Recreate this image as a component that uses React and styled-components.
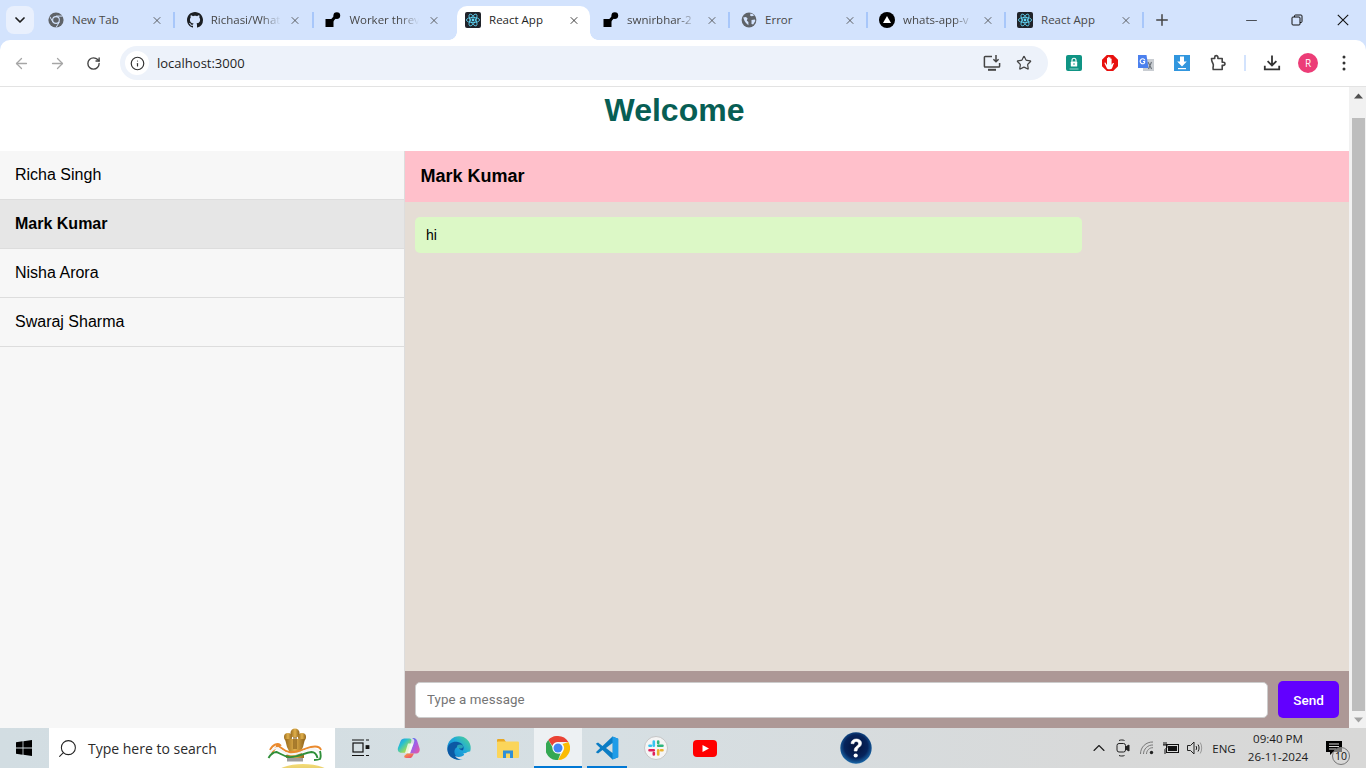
import React from 'react';
import styled, { createGlobalStyle } from 'styled-components';
import { ArrowLeft, ArrowRight, RotateCw, Info, Star, X, Plus, ChevronDown, Minus, ChevronUp, Search } from 'lucide-react';

const Global = createGlobalStyle`
  html, body { margin: 0; padding: 0; height: 100%; overflow: hidden; background: #fff; }
  * { box-sizing: border-box; }
  #root { height: 768px; }
`;

const Screen = styled.div`
  width: 1366px; height: 768px; display: flex; flex-direction: column; overflow: hidden;
  font-family: "Liberation Sans", Arial, sans-serif; background: #d3e3fd;
`;

/* ---------- browser tab strip ---------- */
const TabStrip = styled.div`
  height: 40px; background: #d3e3fd; display: flex; align-items: stretch; flex: none;
  padding-left: 6px;
`;
const TabSearch = styled.div`
  width: 28px; height: 28px; margin: 6px 4px 0 0; border-radius: 8px; background: #e9f0fd;
  display: flex; align-items: center; justify-content: center; color: #1f1f1f; flex: none;
`;
const Tab = styled.div`
  position: relative; width: ${p => p.$w}px; flex: none; display: flex; align-items: center;
  padding-left: 10px; height: 40px;
  font-family: "Open Sans", "Noto Sans", sans-serif; font-size: 11.5px; color: #474747;
  &::after {
    content: ''; position: absolute; right: 1.5px; top: 12px; height: 16px; width: 2px;
    background: ${p => p.$sep ? '#a8c7fa' : 'transparent'};
  }
`;
const ActiveTab = styled.div`
  flex: none; margin: 6px 3px 0 3px; height: 34px; width: 133px; background: #fff; border-radius: 10px 10px 0 0;
  display: flex; align-items: center; padding: 0 0 6px 8px; position: relative;
  font-family: "Open Sans", "Noto Sans", sans-serif; font-size: 11.5px; color: #1f1f1f;
  &::before, &::after { content: ''; position: absolute; bottom: 0; width: 8px; height: 8px; }
  &::before { left: -8px; background: radial-gradient(circle at 0 0, #d3e3fd 7.5px, #fff 8px); }
  &::after { right: -8px; background: radial-gradient(circle at 100% 0, #d3e3fd 7.5px, #fff 8px); }
`;
const FavSlot = styled.span`
  width: 16px; height: 16px; flex: none; display: block;
  svg { display: block; }
`;
const TabTitle = styled.span`
  margin-left: 8px; width: 70px; flex: none; white-space: nowrap; padding-bottom: 1px;
  ${p => p.$fade && `-webkit-mask-image: linear-gradient(90deg, #000 72%, transparent 100%); mask-image: linear-gradient(90deg, #000 72%, transparent 100%);`}
`;
const TabClose = styled.span`
  margin-left: 8.5px; width: 12px; height: 12px; display: flex; align-items: center; justify-content: center;
  color: ${p => p.$active ? '#1f1f1f' : '#474747'}; flex: none;
`;
const NewTab = styled.div`
  width: 33px; display: flex; align-items: center; justify-content: center; color: #444; flex: none;
`;
const WindowControls = styled.div`
  margin-left: auto; display: flex; height: 40px; color: #111;
`;
const WinBtn = styled.div`
  width: 46px; display: flex; align-items: center; justify-content: center;
`;

/* ---------- toolbar ---------- */
const Toolbar = styled.div`
  height: 47px; flex: none; background: #fff; border-bottom: 1px solid #e3e3e3;
  display: flex; align-items: center; padding: 0 0 0 3px; border-radius: 10px 10px 0 0;
`;
const NavBtn = styled.div`
  width: 36px; height: 36px; display: flex; align-items: center; justify-content: center;
  color: ${p => p.$off ? '#a6a6a6' : '#444'}; flex: none;
`;
const Omnibox = styled.div`
  margin-left: 9px; width: 928px; height: 34px; border-radius: 17px; background: #edf2fa;
  display: flex; align-items: center; padding-left: 5px; flex: none;
`;
const SiteInfo = styled.div`
  width: 24px; height: 24px; border-radius: 50%; background: #fff; display: flex; align-items: center; justify-content: center; color: #333;
`;
const Url = styled.span`
  margin-left: 8px; font-family: "Open Sans", "Noto Sans", sans-serif; font-size: 13px; color: #1f1f1f; flex: 1;
`;
const OmniIcon = styled.div`
  width: 32px; display: flex; align-items: center; justify-content: center; color: #444; margin-right: ${p => p.$mr || 0}px;
`;
const ExtBar = styled.div`
  display: flex; align-items: center; margin-left: 8px;
`;
const ExtBtn = styled.div`
  width: 36px; height: 36px; display: flex; align-items: center; justify-content: center; flex: none; color: #444;
`;
const ExtSep = styled.div`
  width: 2px; height: 16px; background: #d3e3fd; margin: 0 8px;
`;
const Avatar = styled.div`
  width: 20px; height: 20px; border-radius: 50%; background: #ec3d77; color: #fff; font-size: 10px;
  font-family: "Open Sans", sans-serif; display: flex; align-items: center; justify-content: center;
`;

/* ---------- page ---------- */
const Viewport = styled.div`
  height: 641px; flex: none; display: flex; background: #fff;
`;
const Page = styled.div`
  width: 1349px; display: flex; flex-direction: column; flex: none;
`;
const Title = styled.h1`
  margin: 0; height: 64px; flex: none; text-align: center; color: #075e54; font-size: 32px; font-weight: 700;
  line-height: 46px;
`;
const ChatLayout = styled.div`
  flex: 1; display: flex; min-height: 0;
`;
const Sidebar = styled.div`
  width: 405px; flex: none; background: #f7f7f7; border-right: 1px solid #ddd;
`;
const Contact = styled.div`
  height: 49px; padding: 0 15px; display: flex; align-items: center; font-size: 16px; color: #000;
  border-bottom: 1px solid #ddd;
  background: ${p => p.$active ? '#e6e6e6' : 'transparent'};
  font-weight: ${p => p.$active ? 700 : 400};
`;
const Chat = styled.div`
  flex: 1; display: flex; flex-direction: column; min-width: 0;
`;
const ChatHeader = styled.div`
  height: 51px; flex: none; background: #ffc0cb; padding: 0 15.5px; display: flex; align-items: center;
  font-size: 18px; font-weight: 700; color: #000;
`;
const Messages = styled.div`
  flex: 1; background: #e5ddd5; padding: 15px 10px;
`;
const Bubble = styled.div`
  width: 667px; height: 36px; background: #dcf8c6; border-radius: 5px; padding: 0 11px; display: flex; align-items: center;
  font-size: 14px; color: #000;
`;
const Composer = styled.div`
  height: 57px; flex: none; background: #ad9896; display: flex; align-items: center; padding: 0 10px;
`;
const MessageInput = styled.input`
  flex: 1; height: 36px; border: 1px solid #ccc; border-radius: 5px; background: #fff; padding: 0 11px; outline: none;
  font-family: Roboto, sans-serif; font-size: 13.3px; letter-spacing: 0.1px;
  &::placeholder { color: #757575; opacity: 1; }
`;
const SendButton = styled.button`
  margin-left: 10px; width: 61px; height: 37px; border: 0; border-radius: 5px; background: #6200ff; color: #fff;
  font-family: Roboto, sans-serif; font-weight: 500; font-size: 13.5px; padding: 0;
`;
const Scrollbar = styled.div`
  width: 17px; flex: none; background: #f1f1f1; display: flex; flex-direction: column; align-items: center; padding-left: 1px;
`;
const ScrollArrow = styled.div`
  height: 17px; flex: none; display: flex; align-items: center; justify-content: center; width: 100%;
`;
const ScrollGap = styled.div`
  height: 14px; flex: none;
`;
const Thumb = styled.div`
  width: 13px; flex: 1; background: #bdbdbd;
`;

/* ---------- windows taskbar ---------- */
const Taskbar = styled.div`
  height: 40px; flex: none; display: flex; align-items: stretch;
  background: linear-gradient(90deg, #d2dde2 0%, #d6dfe3 45%, #d8d9d9 80%, #d8d8d7 100%);
`;
const StartBtn = styled.div`
  width: 49px; flex: none; display: flex; align-items: center; justify-content: center; padding: 0 2px 1px 0;
`;
const SearchBox = styled.div`
  width: 287px; flex: none; background: #fff; display: flex; align-items: center; padding-left: 8px; position: relative;
  font-family: "Open Sans", "Noto Sans", sans-serif; font-size: 14px; color: #2b2b2b; overflow: hidden;
  border-right: 1px solid #d6dfe3;
`;
const SearchGlyph = styled(Search)`
  transform: scaleX(-1); color: #222; flex: none;
`;
const SearchText = styled.span`
  margin-left: 10px;
`;
const Emblem = styled.svg`
  position: absolute; left: 218px; top: 0;
`;
const TaskBtn = styled.div`
  width: 49.2px; flex: none; display: flex; align-items: center; justify-content: center; position: relative;
  ${p => p.$focused && `background: #edf1f3; border-left: 1px solid #d6dfe3;`}
  ${p => p.$line && `&::after { content:''; position:absolute; bottom:0; left:${p.$focused ? 0 : 5}px; right:${p.$focused ? 0 : 4}px; height:2px; background:#0078d4; }`}
`;
const HelpSlot = styled.div`
  margin-left: 102px; width: 49px; display: flex; align-items: center; justify-content: center; flex: none;
`;
const Tray = styled.div`
  margin-left: auto; display: flex; align-items: center; height: 100%; color: #1c1c1c;
  font-family: "Open Sans", "Noto Sans", sans-serif; padding-right: 12px;
`;
const TrayIcon = styled.div`
  width: 24px; display: flex; align-items: center; justify-content: center; flex: none;
`;
const Lang = styled.div`
  font-size: 11.5px; width: 34px; text-align: center;
`;
const Clock = styled.div`
  width: 74px; text-align: center; font-size: 11.6px; line-height: 18px;
`;
const Notif = styled.div`
  position: relative; width: 39px; height: 100%; display: flex; align-items: center; justify-content: center; flex: none; padding-right: 2px;
`;
const NotifBadge = styled.span`
  position: absolute; left: 17px; top: 19px; width: 18px; height: 18px; border-radius: 50%; border: 1px solid #777;
  font-size: 10.5px; color: #111; display: flex; align-items: center; justify-content: center;
  background: rgba(216,216,215,.55);
`;

/* ---------- drawn icons ---------- */
const ChromeGrey = () => (
  <svg width="16" height="16" viewBox="0 0 16 16">
    <circle cx="8" cy="8" r="7.6" fill="#5f6368" />
    <circle cx="8" cy="8" r="3.9" fill="#d3e3fd" />
    <circle cx="8" cy="8" r="2.8" fill="#5f6368" />
    <path d="M8 4.1h6.6M5 10.4L1.8 4.6M11.3 10L8 15.6" stroke="#d3e3fd" strokeWidth="1" />
  </svg>
);
const GithubMark = () => (
  <svg width="16" height="16" viewBox="0 0 16 16" fill="#1b1f23">
    <path d="M8 0C3.58 0 0 3.58 0 8c0 3.54 2.29 6.53 5.47 7.59.4.07.55-.17.55-.38 0-.19-.01-.82-.01-1.49-2.01.37-2.53-.49-2.69-.94-.09-.23-.48-.94-.82-1.13-.28-.15-.68-.52-.01-.53.63-.01 1.08.58 1.23.82.72 1.21 1.87.87 2.33.66.07-.52.28-.87.51-1.07-1.78-.2-3.64-.89-3.64-3.95 0-.87.31-1.59.82-2.15-.08-.2-.36-1.02.08-2.12 0 0 .67-.21 2.2.82.64-.18 1.32-.27 2-.27s1.36.09 2 .27c1.53-1.04 2.2-.82 2.2-.82.44 1.1.16 1.92.08 2.12.51.56.82 1.27.82 2.15 0 3.07-1.87 3.75-3.65 3.95.29.25.54.73.54 1.48 0 1.07-.01 1.93-.01 2.2 0 .21.15.46.55.38A8.01 8.01 0 0016 8c0-4.42-3.58-8-8-8z" />
  </svg>
);
const WorkerMark = () => (
  <svg width="16" height="16" viewBox="0 0 16 16" fill="#000">
    <rect x="0.5" y="7" width="8" height="8" />
    <path d="M7 8.5L11 4" stroke="#000" strokeWidth="3" />
    <circle cx="11.8" cy="3.6" r="3.4" />
  </svg>
);
const ReactMark = () => (
  <svg width="16" height="16" viewBox="0 0 16 16">
    <rect width="16" height="16" rx="2" fill="#20232a" />
    <g fill="none" stroke="#61dafb" strokeWidth="0.8">
      <ellipse cx="8" cy="8" rx="6.6" ry="2.6" />
      <ellipse cx="8" cy="8" rx="6.6" ry="2.6" transform="rotate(60 8 8)" />
      <ellipse cx="8" cy="8" rx="6.6" ry="2.6" transform="rotate(120 8 8)" />
    </g>
    <circle cx="8" cy="8" r="1.4" fill="#61dafb" />
  </svg>
);
const GlobeGrey = () => (
  <svg width="16" height="16" viewBox="0 0 16 16">
    <circle cx="8" cy="8" r="7.4" fill="#5f6368" />
    <path d="M2.2 5.5L5 5l1.6 1.6-.8 2 1.6 1.5v3.2L5 11 3.6 9zM9.5 1.4l-.5 2 1.6.9 2.4-.5-1-1.5zM10.5 8l3.4-.6.4 1.6-2.2 3.4-1.6-.4z" fill="#d3e3fd" />
  </svg>
);
const VercelMark = () => (
  <svg width="16" height="16" viewBox="0 0 16 16">
    <circle cx="8" cy="8" r="8" fill="#000" />
    <path d="M8 4l4 7H4z" fill="#fff" />
  </svg>
);
const InstallIcon = () => (
  <svg width="18" height="18" viewBox="0 0 18 18" fill="none" stroke="#444" strokeWidth="1.5">
    <path d="M9 2.5H2.2a.8.8 0 00-.8.8v9a.8.8 0 00.8.8h13.6a.8.8 0 00.8-.8V9" />
    <path d="M5 15.8h8" strokeWidth="2" />
    <path d="M13 1v6.5M10.4 5.2L13 7.8l2.6-2.6" />
  </svg>
);
const ExtLock = () => (
  <svg width="16" height="16" viewBox="0 0 16 16">
    <rect width="16" height="16" rx="2" fill="#0f9484" />
    <rect x="4.8" y="6.6" width="6.4" height="5" rx=".6" fill="#fff" />
    <path d="M6 6.8V5.2a2 2 0 014 0v1.6" fill="none" stroke="#fff" strokeWidth="1.1" />
    <circle cx="8" cy="9" r=".8" fill="#0f9484" />
    <path d="M3.5 14h9" stroke="#cfeee9" strokeWidth=".7" />
  </svg>
);
const ExtStop = () => (
  <svg width="16" height="16" viewBox="0 0 16 16">
    <path d="M4.8 0h6.4L16 4.8v6.4L11.2 16H4.8L0 11.2V4.8z" fill="#e8110f" />
    <path d="M5 13.5L2.6 8.4c-.3-.7.6-1.100 1-.5L5 10V3.400c0-.8 1-.8 1.100 0v4.100V2.400c0-.8 1.200-.8 1.200 0v5V2.800c0-.8 1.200-.8 1.200 0v4.800V4c0-.8 1.100-.8 1.100 0v6c.4-.8.900-1.600 1.500-2 .6-.3 1 .2.700.7-.7 1.400-1 3-1.900 4.800-.3.5-1 .7-1.900.7H6.400c-.6 0-1.100-.2-1.400-.7z" fill="#fff" />
  </svg>
);
const ExtTranslate = () => (
  <svg width="16" height="16" viewBox="0 0 16 16">
    <rect x="5" y="4" width="11" height="12" fill="#c9cdd2" />
    <path d="M10 7l3.6 7M13.5 7l-3 7" stroke="#6a7077" strokeWidth="1.1" />
    <path d="M0 0h8.5l2 13H0z" fill="#4b80ee" />
    <path d="M7 5.4A2.5 2.5 0 105.8 8.5l.8-.8V6.500H5" fill="none" stroke="#fff" strokeWidth="1.1" />
  </svg>
);
const ExtDown = () => (
  <svg width="16" height="16" viewBox="0 0 16 16">
    <rect width="16" height="16" fill="#3196de" />
    <path d="M6 1.5h4v5h2.8L8 11.4 3.2 6.5H6z" fill="#fff" />
    <rect x="4" y="13" width="8" height="1.2" fill="#fff" />
  </svg>
);
const PuzzleIcon = () => (
  <svg width="18" height="18" viewBox="0 0 18 18" fill="none" stroke="#444" strokeWidth="1.6" strokeLinejoin="round">
    <path d="M2.5 4.500h3.200V3.200a1.600 1.600 0 013.200 0v1.300h4.300v3.700h1.200a1.600 1.600 0 010 3.200h-1.200v4.100H4.200c-.4-1.800-.2-2.300.1-3.400.3-1.200-.2-2.400-.6-3.100-.4-.8-1.200-2.100-1.200-4.500z" />
  </svg>
);
const DownloadTray = () => (
  <svg width="18" height="18" viewBox="0 0 18 18" fill="none" stroke="#333" strokeWidth="1.8">
    <path d="M9 1.5v9.600M4.600 7.200L9 11.400l4.400-4.200" />
    <path d="M1.8 11.800v3.600h14.400v-3.600" />
  </svg>
);
const Kebab = () => (
  <svg width="16" height="16" viewBox="0 0 16 16" fill="#333">
    <circle cx="8" cy="2" r="1.5" /><circle cx="8" cy="8" r="1.5" /><circle cx="8" cy="14" r="1.5" />
  </svg>
);
const RestoreIcon = () => (
  <svg width="12" height="12" viewBox="0 0 12 12" fill="none" stroke="#111" strokeWidth="1">
    <rect x="1" y="3" width="8" height="8" rx="1" /><path d="M3.500 3V2a1 1 0 011-1H10a1 1 0 011 1v5.500a1 1 0 01-1 1H9" />
  </svg>
);
const CloseThin = () => (
  <svg width="12" height="12" viewBox="0 0 12 12" stroke="#111" strokeWidth="1.1"><path d="M.8.8l10.400 10.400M11.200.8L.8 11.200" /></svg>
);
const Tri = ({ up, c = '#505050' }) => (
  <svg width="9" height="6" viewBox="0 0 9 6"><path d={up ? 'M4.500 .5L9 5.500H0z' : 'M4.500 5.500L9 .5H0z'} fill={c} /></svg>
);
const WinLogo = () => (
  <svg width="16" height="16" viewBox="0 0 16 16" fill="#000">
    <path d="M0 2.200L6.600 1.300v6.200H0zM7.400 1.200L16 0v7.500H7.400zM0 8.400h6.600v6.300L0 13.800zM7.400 8.400H16V16l-8.600-1.200z" />
  </svg>
);
const EmblemArt = () => (
  <Emblem width="69" height="40" viewBox="0 0 69 40">
    <defs>
      <linearGradient id="emg" x1="0" y1="0" x2="1" y2="0"><stop offset="0" stopColor="#9a6b1c" /><stop offset=".5" stopColor="#e0b04c" /><stop offset="1" stopColor="#8f621a" /></linearGradient>
      <linearGradient id="dome" x1="0" y1="0" x2="0" y2="1"><stop offset="0" stopColor="#f3dc78" /><stop offset="1" stopColor="#c9a548" /></linearGradient>
    </defs>
    <ellipse cx="36" cy="46" rx="27" ry="10" fill="url(#dome)" />
    <rect x="20" y="29.500" width="16" height="4" fill="#9d9d9d" />
    <g fill="url(#emg)">
      <circle cx="28" cy="5" r="4.500" />
      <circle cx="21" cy="9" r="4" />
      <circle cx="35" cy="9" r="4" />
      <path d="M18 11h20l-2 8-2 4 1 3 2 1v3H19v-3l2-1 1-3-2-4z" />
    </g>
    <path d="M26 9h4v12h-4z" fill="#7d5515" opacity=".55" />
    <g fill="none" strokeWidth="1.900">
      <path d="M3 22c3-6 8-7 10-5-3 1-7 5-8 9" stroke="#ea8a2e" />
      <path d="M9 17.500c5 0 6 5 13 6.500 8 1.500 14-3 22-5 5-1 9 0 10 3" stroke="#ea8a2e" />
      <path d="M2 26c3-5 6-6 8-6 3 1 6 5 12 6 9 1.500 15-4 23-5 3 0 6 1 7 4" stroke="#f4f4f4" />
      <path d="M1.500 30c3-5 6-6 8-6 3 1 7 4 12 5 9 1 15-4 23-5 3 0 5 2 6 6" stroke="#2f8f3a" />
      <path d="M47 32c3 0 4 0 6-1 1-2 1-4 0-8" stroke="#2f8f3a" />
    </g>
  </Emblem>
);
const TaskViewIcon = () => (
  <svg width="18" height="18" viewBox="0 0 18 18" fill="none" stroke="#111" strokeWidth="1.200">
    <rect x="1" y="4" width="10" height="9" />
    <path d="M0 1h12M0 16.500h12M14 1h3M14 16.500h3" />
    <rect x="14.200" y="6.800" width="2.600" height="2.600" fill="#111" />
  </svg>
);
const CopilotIcon = () => (
  <svg width="25" height="24" viewBox="0 0 25 24">
    <defs>
      <linearGradient id="cpa" x1="0" y1="0" x2="1" y2="1"><stop offset="0" stopColor="#2f86ee" /><stop offset=".35" stopColor="#26c0d0" /><stop offset=".7" stopColor="#9adb5a" /><stop offset="1" stopColor="#f6c343" /></linearGradient>
      <linearGradient id="cpb" x1="0" y1="0" x2="1" y2="1"><stop offset="0" stopColor="#2a7bf0" /><stop offset=".45" stopColor="#a05fe8" /><stop offset="1" stopColor="#f0569a" /></linearGradient>
      <linearGradient id="cpc" x1="0" y1="0" x2="1" y2="1"><stop offset="0" stopColor="#f9a13c" /><stop offset="1" stopColor="#ea3f7a" /></linearGradient>
    </defs>
    <path d="M7.500 2.500h5c1.600 0 2.300 1.200 1.800 2.800l-3.400 11.500H4.500C1.500 16.800.2 14.500 1 11.800l2.500-6.500C4.200 3.500 5.600 2.500 7.500 2.500z" fill="url(#cpa)" />
    <path d="M15 2h1.500c2 0 3.300 1.300 3.800 3.200l2.200 7c.9 2.900-.8 5.400-3.700 5.400h-5.800l4.200-11.600c.5-1.500-.2-3.200-2.200-4z" fill="url(#cpb)" />
    <path d="M10 17.500h7l-1.800 3.300c-.5 1-1.500 1.200-2.500 1.200H9.200c-1.500 0-2.400-1-1.800-2.300z" fill="url(#cpc)" />
    <path d="M11 7.500h5.500L13 17h-5z" fill="#fff" opacity=".75" />
  </svg>
);
const EdgeIcon = () => (
  <svg width="24" height="24" viewBox="0 0 24 24">
    <defs>
      <linearGradient id="ega" x1="0" y1="1" x2="1" y2="0"><stop offset="0" stopColor="#0f78c8" /><stop offset=".55" stopColor="#1da7dc" /><stop offset="1" stopColor="#52d88a" /></linearGradient>
    </defs>
    <circle cx="12" cy="12" r="11.700" fill="url(#ega)" />
    <path d="M.5 13C1 7.500 6 5 11 6c3 .6 5 2.500 5.500 5 .3 1.500 0 2.700-1 3.500-2-.4-4-2-4.500-3.500-3 .5-4.500 4-3 7.500 1 2.300 3 4 5.500 5.200C6 24.200 0 19.500.5 13z" fill="#0c59a4" />
    <ellipse cx="13" cy="10.500" rx="3" ry="2" fill="#35c5c0" opacity=".7" />
    <path d="M23.500 15.500c-1 4-4 7-8 8-3 .3-6-1-7.500-3.500 3 1.600 6.500 1 8.500-.5 1-.8.800-1.700-.5-2.200 2 .2 3.500-.3 4.500-1.200 1-.6 2-.8 3-.6z" fill="#d6dfe3" />
  </svg>
);
const FolderIcon = () => (
  <svg width="22" height="20" viewBox="0 0 22 20">
    <path d="M0 2a1 1 0 011-1h6l2 3h-9z" fill="#e8a824" />
    <rect x="0" y="3.500" width="22" height="16.500" rx="1" fill="#fbd55a" />
    <path d="M6 20v-7.500h10V20h-3v-4.500H9V20z" fill="#2f8fd6" />
  </svg>
);
const ChromeColor = () => (
  <svg width="24" height="24" viewBox="0 0 24 24">
    <path d="M12 0a12 12 0 0110.400 6H12a6 6 0 00-5.700 4L2.300 4A12 12 0 0112 0z" fill="#ea4335" />
    <path d="M22.400 6A12 12 0 0112 24l5.200-9A6 6 0 0016.500 8z" fill="#fbbc04" />
    <path d="M12 24A12 12 0 012.300 4l5.200 9a6 6 0 007 4.400z" fill="#34a853" />
    <circle cx="12" cy="12" r="5.600" fill="#fff" />
    <circle cx="12" cy="12" r="4.500" fill="#4285f4" />
  </svg>
);
const VSCodeIcon = () => (
  <svg width="24" height="24" viewBox="0 0 24 24">
    <path d="M17.500 .5L7.500 10 3 6.500 .8 7.700 5.200 12 .8 16.300 3 17.500 7.500 14l10 9.500 5.700-2.300V2.800z" fill="#0a7cc4" />
    <path d="M17.500 .5l5.700 2.300v18.400l-5.700 2.300z" fill="#1f9ce8" />
    <path d="M17.500 7l-6.500 5 6.500 5z" fill="#d5dde0" />
  </svg>
);
const SlackIcon = () => (
  <svg width="24" height="24" viewBox="0 0 24 24">
    <circle cx="12" cy="12" r="11.500" fill="#f5f5f5" stroke="#bbb" strokeWidth=".8" />
    <g strokeWidth="2.600" strokeLinecap="round">
      <path d="M9.800 5.500v4.300M5.500 9.800h1.500" stroke="#36c5f0" />
      <path d="M18.500 9.800h-4.300M14.200 5.500V7" stroke="#2eb67d" />
      <path d="M14.200 18.500v-4.300M18.500 14.200H17" stroke="#ecb22e" />
      <path d="M5.500 14.200h4.300M9.800 18.500V17" stroke="#e01e5a" />
    </g>
  </svg>
);
const YoutubeIcon = () => (
  <svg width="24" height="17" viewBox="0 0 24 17">
    <rect width="24" height="17" rx="4" fill="#f00" />
    <path d="M9.500 5l6.500 3.500-6.500 3.500z" fill="#fff" />
  </svg>
);
const HelpIcon = () => (
  <svg width="32" height="32" viewBox="0 0 32 32">
    <defs>
      <radialGradient id="hg" cx=".5" cy=".45" r=".62"><stop offset="0" stopColor="#04123a" /><stop offset=".6" stopColor="#06245c" /><stop offset="1" stopColor="#2384c8" /></radialGradient>
    </defs>
    <circle cx="16" cy="16" r="15.700" fill="url(#hg)" />
    <path d="M11 11.500c.3-3 2.500-4.500 5.300-4.500 3 0 5.200 1.700 5.200 4.300 0 4-4.500 3.800-4.500 7.700h-2.800c0-5 4.300-4.700 4.300-7.500 0-1.200-.9-2-2.200-2-1.400 0-2.200.9-2.400 2.300z" fill="#fff" stroke="#fff" strokeWidth=".6" />
    <circle cx="15.700" cy="23.500" r="2.100" fill="#fff" />
  </svg>
);
const MeetIcon = () => (
  <svg width="14" height="18" viewBox="0 0 14 18" fill="none" stroke="#222" strokeWidth="1">
    <path d="M3 1.500C4.500 .8 7 .8 8.500 1.500M3 16.500c1.500.7 4 .7 5.500 0" />
    <rect x="1" y="4.500" width="8.500" height="8.500" rx="2" />
    <path d="M9.500 8l3.500-2v6l-3.500-2" fill="#222" />
  </svg>
);
const WifiIcon = () => (
  <svg width="14" height="14" viewBox="0 0 14 14" fill="none" stroke="#777" strokeWidth="1">
    <path d="M.5 13C.5 6 6 .8 13 1M3.500 13c0-5 4.500-9.300 9.500-9M6.500 13c0-3.500 3-6.500 6.500-6.300" />
    <circle cx="11.500" cy="11.500" r="1.700" fill="#222" stroke="none" />
  </svg>
);
const BatteryIcon = () => (
  <svg width="16" height="12" viewBox="0 0 16 12">
    <rect x="3.500" y="2.500" width="12" height="8" fill="none" stroke="#111" strokeWidth="1" />
    <rect x="5" y="4" width="9" height="5" fill="#111" />
    <path d="M1 0v3M3 0v3M0 3h4v2.500L2 7.500V12" fill="none" stroke="#111" strokeWidth="1" />
  </svg>
);
const VolumeIcon = () => (
  <svg width="16" height="14" viewBox="0 0 16 14" fill="none" stroke="#222" strokeWidth="1">
    <path d="M.5 4.500h3L7 1v12L3.500 9.500h-3z" />
    <path d="M9 5c.8 1.200.8 2.800 0 4M11 3.500c1.400 2 1.400 5 0 7" />
    <path d="M13.200 1.500c2 3 2 8 0 11" stroke="#999" />
  </svg>
);
const NotifIcon = () => (
  <svg width="16" height="16" viewBox="0 0 16 16">
    <path d="M0 1h16v11H7l-3 3v-3H0z" fill="#000" />
    <path d="M3 4h10M3 6.500h10M3 9h7" stroke="#d8d8d7" strokeWidth="1" />
  </svg>
);

const tabs = [
  { icon: <ChromeGrey />, title: 'New Tab', sep: true, w: 138.7 },
  { icon: <GithubMark />, title: 'Richasi/What', sep: true, fade: true, w: 138.7 },
  { icon: <WorkerMark />, title: 'Worker threv', fade: true, w: 138.7 },
];
const tabsAfter = [
  { icon: <WorkerMark />, title: 'swnirbhar-2', sep: true, fade: true, w: 138 },
  { icon: <GlobeGrey />, title: 'Error', sep: true, w: 138 },
  { icon: <VercelMark />, title: 'whats-app-v', sep: true, fade: true, w: 138 },
  { icon: <ReactMark />, title: 'React App', sep: true, w: 138 },
];

const BrowserTab = ({ icon, title, sep, fade, w }) => (
  <Tab $sep={sep} $w={w}>
    <FavSlot>{icon}</FavSlot>
    <TabTitle $fade={fade}>{title}</TabTitle>
    <TabClose><X size={17} strokeWidth={1.7} /></TabClose>
  </Tab>
);

export default function App() {
  return (
    <Screen>
      <Global />
      <TabStrip>
        <TabSearch><ChevronDown size={16} strokeWidth={2.6} /></TabSearch>
        {tabs.map(t => <BrowserTab key={t.title} {...t} />)}
        <ActiveTab>
          <FavSlot><ReactMark /></FavSlot>
          <TabTitle>React App</TabTitle>
          <TabClose $active><X size={17} strokeWidth={1.7} /></TabClose>
        </ActiveTab>
        {tabsAfter.map(t => <BrowserTab key={t.title} {...t} />)}
        <NewTab><Plus size={18} strokeWidth={2} /></NewTab>
        <WindowControls>
          <WinBtn><Minus size={17} strokeWidth={1} /></WinBtn>
          <WinBtn><RestoreIcon /></WinBtn>
          <WinBtn><CloseThin /></WinBtn>
        </WindowControls>
      </TabStrip>

      <Toolbar>
        <NavBtn $off><ArrowLeft size={17} strokeWidth={1.8} /></NavBtn>
        <NavBtn $off><ArrowRight size={17} strokeWidth={1.8} /></NavBtn>
        <NavBtn><RotateCw size={15} strokeWidth={2.2} /></NavBtn>
        <Omnibox>
          <SiteInfo><Info size={15} strokeWidth={1.9} /></SiteInfo>
          <Url>localhost:3000</Url>
          <OmniIcon><InstallIcon /></OmniIcon>
          <OmniIcon $mr={8}><Star size={16} strokeWidth={1.8} /></OmniIcon>
        </Omnibox>
        <ExtBar>
          <ExtBtn><ExtLock /></ExtBtn>
          <ExtBtn><ExtStop /></ExtBtn>
          <ExtBtn><ExtTranslate /></ExtBtn>
          <ExtBtn><ExtDown /></ExtBtn>
          <ExtBtn><PuzzleIcon /></ExtBtn>
          <ExtSep />
          <ExtBtn><DownloadTray /></ExtBtn>
          <ExtBtn><Avatar>R</Avatar></ExtBtn>
          <ExtBtn><Kebab /></ExtBtn>
        </ExtBar>
      </Toolbar>

      <Viewport>
        <Page>
          <Title>Welcome</Title>
          <ChatLayout>
            <Sidebar>
              <Contact>Richa Singh</Contact>
              <Contact $active>Mark Kumar</Contact>
              <Contact>Nisha Arora</Contact>
              <Contact>Swaraj Sharma</Contact>
            </Sidebar>
            <Chat>
              <ChatHeader>Mark Kumar</ChatHeader>
              <Messages><Bubble>hi</Bubble></Messages>
              <Composer>
                <MessageInput placeholder="Type a message" />
                <SendButton>Send</SendButton>
              </Composer>
            </Chat>
          </ChatLayout>
        </Page>
        <Scrollbar>
          <ScrollArrow><Tri up /></ScrollArrow>
          <ScrollGap />
          <Thumb />
          <ScrollArrow><Tri c="#a3a3a3" /></ScrollArrow>
        </Scrollbar>
      </Viewport>

      <Taskbar>
        <StartBtn><WinLogo /></StartBtn>
        <SearchBox>
          <SearchGlyph size={21} strokeWidth={1.2} />
          <SearchText>Type here to search</SearchText>
          <EmblemArt />
        </SearchBox>
        <TaskBtn><TaskViewIcon /></TaskBtn>
        <TaskBtn><CopilotIcon /></TaskBtn>
        <TaskBtn><EdgeIcon /></TaskBtn>
        <TaskBtn><FolderIcon /></TaskBtn>
        <TaskBtn $focused $line><ChromeColor /></TaskBtn>
        <TaskBtn $line><VSCodeIcon /></TaskBtn>
        <TaskBtn><SlackIcon /></TaskBtn>
        <TaskBtn><YoutubeIcon /></TaskBtn>
        <HelpSlot><HelpIcon /></HelpSlot>
        <Tray>
          <TrayIcon><ChevronUp size={20} strokeWidth={1.3} /></TrayIcon>
          <TrayIcon><MeetIcon /></TrayIcon>
          <TrayIcon><WifiIcon /></TrayIcon>
          <TrayIcon><BatteryIcon /></TrayIcon>
          <TrayIcon><VolumeIcon /></TrayIcon>
          <Lang>ENG</Lang>
          <Clock>09:40 PM<br />26-11-2024</Clock>
          <Notif><NotifIcon /><NotifBadge>10</NotifBadge></Notif>
        </Tray>
      </Taskbar>
    </Screen>
  );
}
